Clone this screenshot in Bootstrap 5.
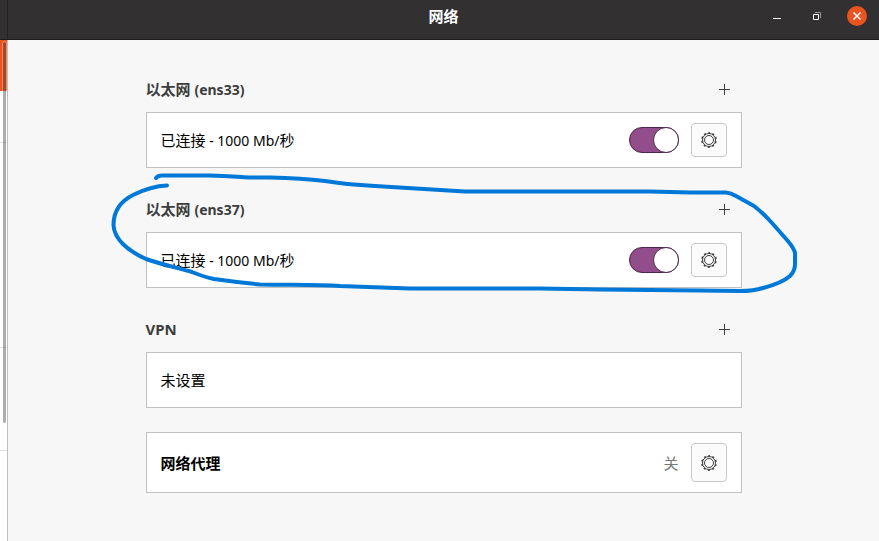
<!DOCTYPE html>
<html lang="zh-CN">
<head>
<meta charset="utf-8">
<meta name="viewport" content="width=device-width, initial-scale=1">
<title>网络</title>
<link href="https://cdn.jsdelivr.net/npm/bootstrap@5.3.0/dist/css/bootstrap.min.css" rel="stylesheet">
<style>
  body { font-family: "Noto Sans", "Noto Sans CJK SC", sans-serif; font-size: 15px; line-height: 20px; color: #000; background: #f7f7f7; }
  .titlebar { height: 40px; background: #323030; border-bottom: 1px solid #1d1c1c; color: #fff; }
  .titlebar-side { width: 8px; border-right: 1px solid #242323; }
  .title-text { font-size: 15px; line-height: 20px; padding-bottom: 8px; }
  .latin { font-size: 14px; }
  .win-buttons { right: 12px; top: 6px; gap: 20px; }
  .win-btn { width: 20px; height: 20px; border: 0; padding: 0; background: none; color: #fff; border-radius: 50%; display: flex; }
  .win-close { background: #e95420; }
  .side { width: 8px; background: #fff; border-right: 1px solid #bfbfbf; }
  .side-group { height: 103px; border-bottom: 1px solid #dedede; }
  .side-group.long { height: 205px; }
  .side-active { height: 51px; background: #e95420; }
  .side-thumb { left: 3px; top: 2px; width: 3px; height: 381px; border-radius: 2px; background: rgba(60, 60, 60, .42); outline: 1px solid rgba(255, 255, 255, .3); }
  .panel-col { max-width: 596px; padding-top: 32px; }
  .net-section { margin-bottom: 24px; }
  .sec-head { height: 34px; margin-bottom: 6px; color: #3d3d3d; }
  .sec-head h2 { font-size: 15px; line-height: 20px; font-weight: 700; }
  .add-btn { width: 34px; height: 34px; padding: 0; border: 0; background: none; color: #3d3d3d; display: flex; align-items: center; justify-content: center; }
  .box { background: #fff; border: 1px solid #c0c0c0; padding: 10px 14px; min-height: 56px; gap: 12px; }
  .gear-btn { width: 36px; min-height: 34px; padding: 0; border: 1px solid #c8c8c8; border-radius: 4px; background: #fbfbfb; color: #3d3d3d; display: flex; align-items: center; justify-content: center; align-self: stretch; }
  .box.tall .gear-btn { min-height: 39px; }
  .net-switch.form-check-input { width: 50px; height: 26px; margin: 0; border: 1px solid #4b2648; border-radius: 13px; background: #e1e1e1; display: flex; flex: none; }
  .net-switch.form-check-input:checked { background: #924d8b; border-color: #4b2648; justify-content: flex-end; }
  .net-switch::before { content: ""; width: 26px; height: 26px; margin: -1px; border: 1px solid #4b2648; border-radius: 50%; background: #fff; }
  .state { color: #777; }
  .ink { left: -46px; top: -32px; pointer-events: none; }
</style>
</head>
<body class="min-vh-100 d-flex flex-column">
<svg class="d-none">
  <symbol id="gear" viewBox="0 0 16 16">
    <circle cx="8" cy="8" r="6.500" fill="none" stroke="currentColor" stroke-width="1"/>
    <circle cx="8" cy="8" r="4.500" fill="none" stroke="currentColor" stroke-width="1"/>
    <circle cx="8" cy="8" r="7.200" fill="none" stroke="currentColor" stroke-width="1.400" stroke-dasharray="2 2.524" stroke-dashoffset="1" transform="rotate(-90 8 8)"/>
  </symbol>
  <symbol id="plus" viewBox="0 0 11 11"><path d="M5.5 0v11M0 5.5h11" stroke="currentColor" fill="none"/></symbol>
</svg>
<header class="titlebar d-flex position-relative">
  <div class="titlebar-side"></div>
  <div class="flex-grow-1 d-flex align-items-center justify-content-center"><h1 class="title-text fw-bold m-0">网络</h1></div>
  <div class="win-buttons position-absolute d-flex">
    <button type="button" class="win-btn" aria-label="最小化"><svg width="20" height="20" viewBox="0 0 20 20"><path d="M6 12.5h8" stroke="#fff"/></svg></button>
    <button type="button" class="win-btn" aria-label="还原"><svg width="20" height="20" viewBox="0 0 20 20" fill="none"><path d="M8 6.5h5.500v5.500" stroke="#999"/><path d="M6.500 8.500h5v5h-5z" stroke="#fff"/></svg></button>
    <button type="button" class="win-btn win-close" aria-label="关闭"><svg width="20" height="20" viewBox="0 0 20 20"><path d="M6.500 6.500l7 7M13.500 6.500l-7 7" stroke="#fff" stroke-width="1.500"/></svg></button>
  </div>
</header>
<div class="d-flex flex-grow-1">
  <aside class="side position-relative flex-shrink-0">
    <div class="side-group"><div class="side-active"></div></div>
    <div class="side-group long"></div>
    <div class="side-group"></div>
    <div class="side-thumb position-absolute"></div>
  </aside>
  <main class="flex-grow-1">
    <div class="panel-col mx-auto">
      <section class="net-section">
        <div class="sec-head d-flex align-items-center justify-content-between">
          <h2 class="m-0">以太网 <span class="latin">(ens33)</span></h2>
          <button type="button" class="add-btn" aria-label="添加 ens33 配置"><svg width="11" height="11"><use href="#plus"/></svg></button>
        </div>
        <div class="box d-flex align-items-center">
          <label class="flex-grow-1" for="sw33">已连接<span class="latin"> - 1000 Mb/</span>秒</label>
          <input class="form-check-input net-switch" type="checkbox" role="switch" id="sw33" checked>
          <button type="button" class="gear-btn" aria-label="设置 ens33"><svg width="16" height="16"><use href="#gear"/></svg></button>
        </div>
      </section>
      <section class="net-section position-relative">
        <div class="sec-head d-flex align-items-center justify-content-between">
          <h2 class="m-0">以太网 <span class="latin">(ens37)</span></h2>
          <button type="button" class="add-btn" aria-label="添加 ens37 配置"><svg width="11" height="11"><use href="#plus"/></svg></button>
        </div>
        <div class="box d-flex align-items-center">
          <label class="flex-grow-1" for="sw37">已连接<span class="latin"> - 1000 Mb/</span>秒</label>
          <input class="form-check-input net-switch" type="checkbox" role="switch" id="sw37" checked>
          <button type="button" class="gear-btn" aria-label="设置 ens37"><svg width="16" height="16"><use href="#gear"/></svg></button>
        </div>
        <svg class="ink position-absolute" width="720" height="140" viewBox="100 160 720 140" fill="none" stroke="#0078d7" stroke-width="4" stroke-linecap="round" stroke-linejoin="round" aria-hidden="true">
          <path d="M156 178Q158 175.500 162 175.500H210C229 176 238 177 249 177.500H270C291 178 308 179 325 181C343 184 357 185 375 186L465 191.500H650L690 192.500H726Q731 193 736 196L754 206Q763 213 772 223L787 240Q794 248 795 253V264Q795 271 790 276Q782 283 763 288Q754 291 740 291L700 290.500L600 289.500L540 288.500H410L340 286C320 284.500 300 285 260 284.500C245 283 228 281 214 279C204 277 197 274 192 272C178 268 160 264 146 259C128 251 114 239 113.500 225C113.500 210 121 201 133 195C143 190 154 186 167 185.500"/>
        </svg>
      </section>
      <section class="net-section">
        <div class="sec-head d-flex align-items-center justify-content-between">
          <h2 class="m-0">VPN</h2>
          <button type="button" class="add-btn" aria-label="添加 VPN"><svg width="11" height="11"><use href="#plus"/></svg></button>
        </div>
        <div class="box d-flex align-items-center">未设置</div>
      </section>
      <section class="net-section">
        <div class="box tall d-flex align-items-center">
          <span class="flex-grow-1 fw-bold">网络代理</span>
          <span class="state">关</span>
          <button type="button" class="gear-btn" aria-label="设置网络代理"><svg width="16" height="16"><use href="#gear"/></svg></button>
        </div>
      </section>
    </div>
  </main>
</div>
<script src="https://cdn.jsdelivr.net/npm/bootstrap@5.3.0/dist/js/bootstrap.bundle.min.js"></script>
</body>
</html>
